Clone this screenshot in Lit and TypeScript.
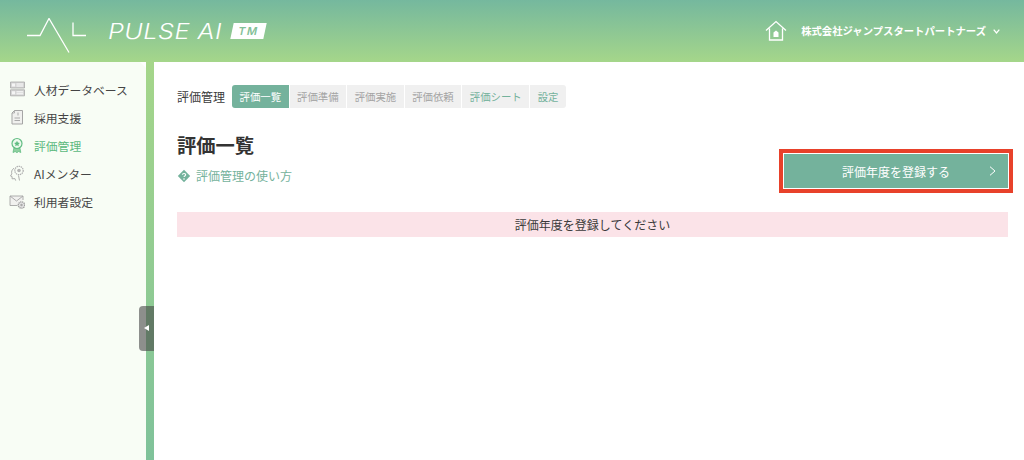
import { LitElement, html, css, svg } from "lit";
import { customElement } from "lit/decorators.js";

const icons = [
  svg`<path d="M1.500 1h14v6h-14zM1.500 8.800h14v6h-14z" fill="#d6d6d6" stroke="#a8a8a8" stroke-width=".8"/><path d="M3 2.500h3v3H3zM3 10.300h3v3H3z" fill="#f5f5f5"/><path d="M7.500 3h6.500M7.500 5h6.500M7.500 10.800h6.500M7.500 12.800h6.500" stroke="#fff" stroke-width=".9"/>`,
  svg`<path d="M5.500 1.500h8v13.500H3V4z" fill="#f0f0ee" stroke="#a5a5a5" stroke-width="1"/><path d="M5.500 1.500V4H3" fill="none" stroke="#a5a5a5" stroke-width=".8"/><path d="M9 3.500v3M5.500 9h5.500M5.500 11.500h5.500" stroke="#aaa" stroke-width="1"/>`,
  svg`<path d="M5 10.500l-1 5 2.200-1 1.700 1.200 1.700-1.200 2.200 1-1-5z" fill="#8fd0a0" stroke="#62bd83" stroke-width=".8"/><circle cx="8" cy="6.500" r="5" fill="#eef9ee" stroke="#62bd83" stroke-width="1.200"/><path d="M8 3.800l.9 1.800 2 .3-1.450 1.400.35 2L8 8.350l-1.800.95.35-2L5.100 5.900l2-.3z" fill="#62bd83"/>`,
  svg`<path d="M5 3.200C2.800 4.500 2.200 7 2.800 8.800L1.500 11l1.600.6v2.200l2.800-.2.800 2" fill="none" stroke="#a5a5a5" stroke-width=".9"/><path d="M9.500 10.500l1 5" stroke="#a5a5a5" stroke-width=".9"/><circle cx="10" cy="5.500" r="4.200" fill="none" stroke="#b0b0b0" stroke-width="1.300" stroke-dasharray="1.400 .7"/><circle cx="10" cy="5.500" r="1.800" fill="#b5b5b5"/>`,
  svg`<path d="M8.500 12.500H1V3h13v4" fill="#f1f1ef" stroke="#a5a5a5" stroke-width=".9"/><path d="M1 3l6.500 5L14 3" fill="none" stroke="#a5a5a5" stroke-width=".9"/><circle cx="12.500" cy="12" r="3.200" fill="#e2e2e2" stroke="#a0a0a0" stroke-width="1.300" stroke-dasharray="1.300 .6"/><circle cx="12.500" cy="12" r="1.200" fill="#aaa"/>`,
];

const nav = [
  { label: "人材データベース" },
  { label: "採用支援" },
  { label: "評価管理", active: true },
  { label: "AIメンター" },
  { label: "利用者設定" },
];

const tabs = [
  { label: "評価一覧", kind: "on" },
  { label: "評価準備", kind: "" },
  { label: "評価実施", kind: "" },
  { label: "評価依頼", kind: "" },
  { label: "評価シート", kind: "teal" },
  { label: "設定", kind: "teal" },
];

@customElement("app-root")
export class AppRoot extends LitElement {
  static styles = css`
    :host {
      display: block;
      width: 1024px;
      height: 460px;
      overflow: hidden;
      position: relative;
      background: #fff;
      font-family: "Noto Sans CJK JP", "Noto Sans", sans-serif;
      color: #333;
    }
    .header {
      height: 62px;
      background: linear-gradient(#75b89e, #a5d68a);
      display: flex;
      align-items: center;
      padding: 0 24px 0 27px;
      box-sizing: border-box;
    }
    .mark { width: 60px; height: 36px; margin-top: 10px; display: block; flex: none; }
    .word {
      margin-left: 21px;
      width: 115px;
      font: italic 300 21px/1 "Inter", sans-serif;
      letter-spacing: 0.4px;
      white-space: nowrap;
      color: #fff;
      transform: scaleX(1.2);
      transform-origin: left;
    }
    .tm {
      margin-left: 9px;
      width: 33px;
      height: 16px;
      background: #fff;
      transform: skewX(-12deg);
      color: #83c097;
      display: flex;
      align-items: center;
      justify-content: center;
      font: 600 11px/1 "Inter", sans-serif;
      letter-spacing: 1.500px;
    }
    .right { margin-left: auto; display: flex; align-items: center; }
    .home { width: 22px; height: 22px; display: block; margin-right: 14px; }
    .company { font-size: 10.35px; font-weight: 700; color: #fff; line-height: 1; }
    .caret { width: 7px; height: 5px; margin-left: 7px; display: block; }
    .body { display: flex; height: 398px; }
    .side {
      width: 146px;
      background: #f8fdf5;
      padding-top: 13px;
      box-sizing: border-box;
      clip-path: polygon(0 0, 140px 0, 146px 6px, 146px 100%, 0 100%);
    }
    .item {
      height: 28px;
      display: flex;
      align-items: center;
      padding-left: 9px;
      font-size: 11.8px;
      color: #444;
    }
    .item svg { width: 16px; height: 16px; margin-right: 9px; flex: none; }
    .item.active { color: #5cb97e; }
    .strip { width: 8px; background: linear-gradient(#a5d68a, #7fc29a); }
    .main { flex: 1; padding: 23px 16px 0 23px; min-width: 0; }
    .crumbs { display: flex; align-items: center; height: 23px; }
    .crumb { font-size: 12px; margin-right: 7px; color: #3a3a3a; }
    .tabs { display: flex; gap: 1px; }
    .tab {
      height: 23px;
      padding: 0 7.5px;
      display: flex;
      align-items: center;
      font-size: 10.4px;
      background: #f0f0f0;
      color: #a4a4a4;
    }
    .tab:first-child { border-radius: 3px 0 0 3px; }
    .tab:last-child { border-radius: 0 3px 3px 0; }
    .tab.on { background: #74b29c; color: #fff; }
    .tab.teal { color: #74b29c; }
    .head { display: flex; justify-content: space-between; align-items: flex-start; }
    h1 { margin: 23px 0 0; font-size: 19.3px; font-weight: 700; line-height: 28px; color: #333; }
    .help { display: flex; align-items: center; margin-top: 9px; font-size: 12px; color: #74b29c; line-height: 16px; }
    .help svg { width: 14px; height: 14px; margin-right: 5px; }
    .cta {
      margin: 41px -5px 0 0;
      width: 234px;
      height: 44px;
      box-sizing: border-box;
      border: 4px solid #e8412a;
      padding: 1px;
      display: flex;
    }
    .cta div {
      flex: 1;
      background: #74b29c;
      color: #fff;
      font-size: 12px;
      display: flex;
      align-items: center;
      justify-content: center;
      position: relative;
    }
    .cta svg { position: absolute; right: 12px; top: 12px; width: 7px; height: 10px; }
    .alert {
      margin-top: 19px;
      height: 25px;
      background: #fbe3e8;
      display: flex;
      align-items: center;
      justify-content: center;
      font-size: 12px;
      color: #3a3a3a;
    }
    .handle {
      position: absolute;
      left: 139px;
      top: 306px;
      width: 15px;
      height: 45px;
      background: rgba(70, 70, 70, 0.6);
      border-radius: 4px 0 0 4px;
    }
    .handle::after {
      content: "";
      position: absolute;
      left: 5px;
      top: 19px;
      border-style: solid;
      border-width: 3px 5px 3px 0;
      border-color: transparent #fff transparent transparent;
    }
  `;

  render() {
    return html`
      <div class="header">
        <svg class="mark" viewBox="0 0 60 36" fill="none" stroke="#fff" stroke-width="1.300">
          <path d="M0 17.500h13L22 0.500 42 34.500M46 4.500v13h13"/>
        </svg>
        <span class="word">PULSE AI</span>
        <span class="tm">TM</span>
        <div class="right">
          <svg class="home" viewBox="0 0 22 22" fill="none" stroke="#fff" stroke-width="1.300">
            <path d="M1 10.500 11 1.500l10 9M4.500 8.500V20h13V8.500"/>
            <path d="M8.500 17v-4.500L11 10.500l2.500 2V17z" fill="#fff" stroke="none"/>
          </svg>
          <span class="company">株式会社ジャンプスタートパートナーズ</span>
          <svg class="caret" viewBox="0 0 7 5" fill="none" stroke="#fff" stroke-width="1.300"><path d="M.7.7 3.500 4 6.300.7"/></svg>
        </div>
      </div>
      <div class="body">
        <nav class="side">
          ${nav.map(
            (n, i) => html`<div class="item ${n.active ? "active" : ""}">
              <svg viewBox="0 0 16 16">${icons[i]}</svg>${n.label}
            </div>`
          )}
        </nav>
        <div class="strip"></div>
        <main class="main">
          <div class="crumbs">
            <span class="crumb">評価管理</span>
            <div class="tabs">
              ${tabs.map((t) => html`<div class="tab ${t.kind}">${t.label}</div>`)}
            </div>
          </div>
          <div class="head">
            <div>
              <h1>評価一覧</h1>
              <div class="help">
                <svg viewBox="0 0 14 14">
                  <path d="M7 .8 13.200 7 7 13.200.8 7z" fill="#74b29c"/>
                  <path d="M5.300 5.800C5.500 4 8.700 4 8.700 5.800c0 1.200-1.700 1.100-1.700 2.300" fill="none" stroke="#fff" stroke-width="1.100"/>
                  <circle cx="7" cy="10" r=".8" fill="#fff"/>
                </svg>
                評価管理の使い方
              </div>
            </div>
            <div class="cta">
              <div>評価年度を登録する
                <svg viewBox="0 0 7 10" fill="none" stroke="#fff" stroke-width="1"><path d="M1 .7 6 5 1 9.300"/></svg>
              </div>
            </div>
          </div>
          <div class="alert">評価年度を登録してください</div>
        </main>
      </div>
      <div class="handle"></div>
    `;
  }
}
